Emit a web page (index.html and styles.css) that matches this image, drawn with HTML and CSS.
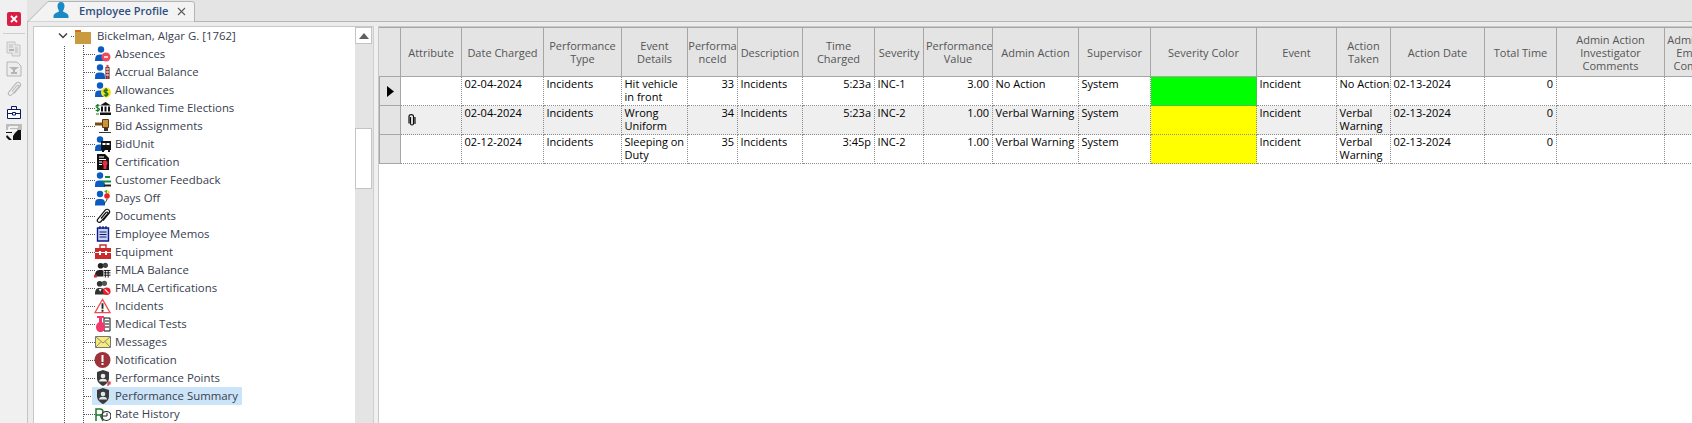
FILE: index.html
```html
<!DOCTYPE html>
<html lang="en">
<head>
<meta charset="utf-8">
<title>Employee Profile</title>
<link rel="stylesheet" href="styles.css">
</head>
<body>
<div class="app">
  <aside class="toolbar">
    <div class="close-btn"><svg width="14" height="14" viewBox="0 0 14 14"><rect width="14" height="14" rx="2" fill="#d81e45"/><path d="M4 4l6 6M10 4l-6 6" stroke="#fff" stroke-width="1.800"/></svg></div>
    <div class="tool-sep"></div>
    <svg class="tool" width="16" height="16" viewBox="0 0 16 16"><path d="M1 1h8v3h5v11H6v-3H1z" fill="#e6e6e6" stroke="#c4c4c4"/><path d="M3 4h4M3 6h4M9 7h3M9 9h3M9 11h3" stroke="#bdbdbd"/><path d="M3 9h5" stroke="#b5b5b5" stroke-width="2"/></svg>
    <svg class="tool" width="16" height="16" viewBox="0 0 16 16"><path d="M1 1h10l4 4v10H1z" fill="#ececec" stroke="#b5b5b5"/><path d="M3 6h10l-4 3v2h2v2H5v-2h2V9z" fill="#b4b4b4"/></svg>
    <svg class="tool" width="16" height="16" viewBox="0 0 16 16"><path d="M6 10.500L11 4.500c1.200-1.300 2.700.1 1.600 1.500L6 13.500c-2 2.300-5-.3-3-2.700L10 2.300c2.400-2.800 6.200.5 3.800 3.300L8 12.500" fill="none" stroke="#b8b8b8" stroke-width="1.100"/></svg>
    <svg class="tool tool-gap" width="16" height="16" viewBox="0 0 16 16"><path d="M1.500 5.500h13v9h-13z" fill="#fff" stroke="#0b1a66"/><path d="M5.500 5.500v-3h5v3M1.500 9.500h13" fill="none" stroke="#0b1a66"/><path d="M6.500 8.500h3v2.500h-3z" fill="#fff" stroke="#0b1a66"/></svg>
    <svg class="tool" width="16" height="16" viewBox="0 0 16 16"><rect width="16" height="6" fill="#bdbdbd"/><path d="M3 3h9M3 3v3h8" fill="none" stroke="#fff" stroke-width="1.500"/><path d="M9 9l3-3h3v10H7v-4z" fill="#111"/><path d="M0 8h6v1H0zM1 11l5 5H3l-3-3z" fill="#111"/></svg>
  </aside>
  <main class="workspace">
    <div class="tabstrip">
      <div class="tab">
        <svg class="tab-shape" width="168" height="22" viewBox="0 0 168 22"><path d="M0.500 22L21 1.500H165q2.500 0 2.500 2.500V22z" fill="#f3f3f3" stroke="#b4b4b4"/></svg>
        <svg class="tab-icon" width="16" height="16" viewBox="0 0 16 16"><path d="M8 0c2.500 0 3.500 2 3.500 4S10.500 8 10 9c0 1.500 5 1.500 5.500 5v2H.5v-2c.5-3.500 5.500-3.500 5.500-5-.5-1-1.500-3-1.500-5S5.500 0 8 0z" fill="#1b8ac4"/></svg>
        <span class="tab-title">Employee Profile</span>
        <svg class="tab-close" width="9" height="9" viewBox="0 0 9 9"><path d="M1 1l7 7M8 1L1 8" stroke="#5c5c5c" stroke-width="1.100"/></svg>
      </div>
    </div>
    <div class="panel">
      <section class="tree-pane">
        <div class="tree">
          <div class="tree-level">
            <div class="root-row">
              <svg class="chevron" width="10" height="6" viewBox="0 0 10 6"><path d="M1 .5l4 4 4-4" fill="none" stroke="#444" stroke-width="1.500"/></svg>
              <span class="root-dots"></span>
              <svg class="folder" width="16" height="15" viewBox="0 0 16 15"><path d="M0 1h6v2H0z" fill="#cf6f18"/><path d="M0 3h16v12H0z" fill="#c99a3f"/></svg>
              <span class="node-label">Bickelman, Algar G. [1762]</span>
            </div>
            <ul class="nodes">
              <li class="node"><span class="node-body"><svg class="ico" viewBox="0 0 16 16"><circle cx="6" cy="3.500" r="3.200" fill="#0a5cc4"/><path d="M0 15c0-6 2-6.500 6-6.500s6 .5 6 6.500z" fill="#0a5cc4"/><circle cx="11" cy="11" r="4.500" fill="#ef4a5a"/><path d="M9 11h4" stroke="#fff" stroke-width="1.500"/></svg><span class="node-label">Absences</span></span></li>
              <li class="node"><span class="node-body"><svg class="ico" viewBox="0 0 16 16"><circle cx="5" cy="3.500" r="3.200" fill="#0a5cc4"/><path d="M0 15c0-6 1-6.500 5-6.500s5 .5 5 6.500z" fill="#0a5cc4"/><path d="M10.500 3h4v12h-4z" fill="#222"/><path d="M11.500 1h2v14h-2z" fill="#e23b3b"/><path d="M11 5h3M11 8h3M11 11h3" stroke="#fff"/></svg><span class="node-label">Accrual Balance</span></span></li>
              <li class="node"><span class="node-body"><svg class="ico" viewBox="0 0 16 16"><circle cx="5" cy="3.500" r="3.200" fill="#0a5cc4"/><path d="M0 15c0-6 1-6.500 5-6.500s5 .5 5 6.500z" fill="#0a5cc4"/><circle cx="11" cy="10.500" r="5" fill="#f5e61a"/><path d="M13 8.500c-1-1-4-1-4 .7s4 1 4 2.800-3 1.600-4 .6M11 6v9" fill="none" stroke="#11632a" stroke-width="1.200"/></svg><span class="node-label">Allowances</span></span></li>
              <li class="node"><span class="node-body"><svg class="ico" viewBox="0 0 16 16"><path d="M4.500 5.500C3 4.500 1 5 1 6.500s3.500 1 3.500 2.800-2.800 1.600-3.900.6M2.800 4v8M1 14h3" fill="none" stroke="#0b7a22" stroke-width="1.100"/><path d="M10.500 2L16 5.500H5z" fill="#111"/><path d="M6 6.500h2v5H6zM9.500 6.500h2v5h-2zM13 6.500h2v5h-2zM5 12.500h11V15H5z" fill="#111"/></svg><span class="node-label">Banked Time Elections</span></span></li>
              <li class="node"><span class="node-body"><svg class="ico" viewBox="0 0 16 16"><path d="M7.500 1.500h6v8h-6z" fill="#c8953a" stroke="#5a3c10"/><path d="M0 4.500h7.500v3H0z" fill="#7a4a12"/><path d="M4 14h12v1H4zM9 10h4v3H9z" fill="#333"/></svg><span class="node-label">Bid Assignments</span></span></li>
              <li class="node"><span class="node-body"><svg class="ico" viewBox="0 0 16 16"><circle cx="5" cy="3.500" r="3.200" fill="#0a5cc4"/><path d="M0 15c0-6 1-6.500 5-6.500s5 .5 5 6.500z" fill="#0a5cc4"/><rect x="6" y="5" width="10" height="9" fill="#111"/><path d="M7.500 7h3v2h-3zM11.500 7h3v2h-3z" fill="#fff"/><path d="M7 15h2M13 15h2" stroke="#111" stroke-width="2"/></svg><span class="node-label">BidUnit</span></span></li>
              <li class="node"><span class="node-body"><svg class="ico" viewBox="0 0 16 16"><path d="M2 0h8l4 4v12H2z" fill="#111"/><path d="M4 2.500h5v1H4zM4 5h7v1H4z" fill="#fff"/><path d="M4 7.500h3v1H4zM4 10h3v1H4z" fill="#fff"/><circle cx="10" cy="9" r="2.500" fill="#ed2f3b"/><path d="M8.500 10.500h3V15h-3z" fill="#ed2f3b"/></svg><span class="node-label">Certification</span></span></li>
              <li class="node"><span class="node-body"><svg class="ico" viewBox="0 0 16 16"><circle cx="5" cy="3.500" r="3.200" fill="#0a5cc4"/><path d="M0 15c0-6 1-6.500 5-6.500s5 .5 5 6.500z" fill="#0a5cc4"/><path d="M10 4h5v2h-5zM7 8.500h9v2H7z" fill="#0e8c3a"/><path d="M9 12.500h7v2H9z" fill="#222"/></svg><span class="node-label">Customer Feedback</span></span></li>
              <li class="node"><span class="node-body"><svg class="ico" viewBox="0 0 16 16"><circle cx="5" cy="4" r="3.200" fill="#0a5cc4"/><path d="M0 15.500c0-6 1-6.500 5-6.500s5 .5 5 6.500z" fill="#0a5cc4"/><path d="M9 1l3-1v4z" fill="#2ab82a"/><path d="M12 0l3 2-2 3z" fill="#f5d51a"/><circle cx="12" cy="6" r="2.800" fill="#e8202a"/><path d="M12 9c0 2-2 3-3 5" fill="none" stroke="#222"/></svg><span class="node-label">Days Off</span></span></li>
              <li class="node"><span class="node-body"><svg class="ico" viewBox="0 0 16 16"><path d="M6 10.500L11 4.500c1.200-1.300 2.700.1 1.600 1.500L6 13.500c-2 2.300-5-.3-3-2.700L10 2.300c2.400-2.800 6.200.5 3.800 3.300L8 12.500" fill="none" stroke="#111" stroke-width="1.200"/></svg><span class="node-label">Documents</span></span></li>
              <li class="node"><span class="node-body"><svg class="ico" viewBox="0 0 16 16"><path d="M2.500 2h11v13h-11z" fill="#c9d2ee" stroke="#0a1a8c" stroke-width="1.400"/><path d="M5 0v3M8 0v3M11 0v3M4.500 6h7M4.500 8.500h7M4.500 11h7" stroke="#0a1a8c" stroke-width="1.200"/></svg><span class="node-label">Employee Memos</span></span></li>
              <li class="node"><span class="node-body"><svg class="ico" viewBox="0 0 16 16"><path d="M5 4V1h6v3" fill="none" stroke="#c92a2a" stroke-width="1.400"/><path d="M0 4h16v4H0zM0 9h16v6H0z" fill="#c92a2a"/><path d="M4 7h2v4H4zM10 7h2v4h-2z" fill="#fff"/></svg><span class="node-label">Equipment</span></span></li>
              <li class="node"><span class="node-body"><svg class="ico wide" viewBox="0 0 18 16"><circle cx="7" cy="3.500" r="3" fill="#222"/><circle cx="12" cy="3" r="2.800" fill="#444"/><path d="M1 15c0-6 2-7 6-7s4 1 5 2v5z" fill="#222"/><path d="M0 13h3v3H0z" fill="#d92c2c"/><path d="M10 8h8v8h-8z" fill="#fff"/><path d="M10.500 8.500h7M10.500 11h7M10.500 13.500h7M12 8v8M15 8v8" stroke="#111"/></svg><span class="node-label">FMLA Balance</span></span></li>
              <li class="node"><span class="node-body"><svg class="ico wide" viewBox="0 0 18 16"><circle cx="6" cy="3.500" r="3" fill="#333"/><circle cx="11" cy="3" r="2.800" fill="#555"/><path d="M1 15c0-6 2-7 5-7s5 1 6 2v5z" fill="#333"/><path d="M5 9l1.500 3L8 9z" fill="#fff"/><circle cx="13.500" cy="11.500" r="4" fill="#ed1c24"/><path d="M11.500 9.500l4 4" stroke="#fff" stroke-width="1.200"/></svg><span class="node-label">FMLA Certifications</span></span></li>
              <li class="node"><span class="node-body"><svg class="ico wide" viewBox="0 0 18 16"><path d="M9 1L17 15H1z" fill="#fff" stroke="#f04a4a" stroke-width="1.300"/><path d="M8 5h2v6H8zM8 12h2v2H8z" fill="#222"/></svg><span class="node-label">Incidents</span></span></li>
              <li class="node"><span class="node-body"><svg class="ico" viewBox="0 0 16 16"><path d="M9 2h6v13H9z" fill="#fff" stroke="#111"/><path d="M10 5h4M10 8h4M10 11h4" stroke="#111"/><path d="M2 0h7v2H7v4c2 1 3 3 3 5 0 3-2 5-4.500 5S1 14 1 11c0-2 1-4 3-5V2H2z" fill="#f03a6e"/></svg><span class="node-label">Medical Tests</span></span></li>
              <li class="node"><span class="node-body"><svg class="ico" viewBox="0 0 16 16"><path d="M.500 2.500h15v11H.5z" fill="#f7ec7a" stroke="#777"/><path d="M1 3l7 6 7-6M1 13l5-5.500M15 13l-5-5.500" fill="none" stroke="#888"/></svg><span class="node-label">Messages</span></span></li>
              <li class="node"><span class="node-body"><svg class="ico wide" viewBox="0 0 16 16"><circle cx="8" cy="8" r="8" fill="#9c3338"/><path d="M7 3h2v7H7zM7 11h2v2H7z" fill="#fff"/></svg><span class="node-label">Notification</span></span></li>
              <li class="node"><span class="node-body"><svg class="ico" viewBox="0 0 16 16"><path d="M8 0l6 2v6c0 4-3 6.500-6 8-3-1.500-6-4-6-8V2z" fill="#3a3a3a"/><circle cx="8" cy="6" r="2.300" fill="#eee"/><path d="M4 11.500c0-2 2-2.700 4-2.700s4 .7 4 2.700z" fill="#eee"/><path d="M12 12h4v4h-4z" fill="#fff"/><path d="M13 16v-4h2v2h-2" fill="none" stroke="#d01818" stroke-width="1.100"/></svg><span class="node-label">Performance Points</span></span></li>
              <li class="node is-selected"><span class="node-body"><svg class="ico" viewBox="0 0 16 16"><path d="M8 0l6 2v6c0 4-3 6.500-6 8-3-1.500-6-4-6-8V2z" fill="#3a3a3a"/><circle cx="8" cy="6" r="2.300" fill="#dfe6ee"/><path d="M4 11.500c0-2 2-2.700 4-2.700s4 .7 4 2.700z" fill="#dfe6ee"/></svg><span class="node-label">Performance Summary</span></span></li>
              <li class="node"><span class="node-body"><svg class="ico" viewBox="0 0 16 16"><path d="M1 15V3h4a3 3 0 0 1 0 6H1M5 9l3 6" fill="none" stroke="#1a7a2a" stroke-width="1.500"/><circle cx="11.500" cy="10" r="4.500" fill="#fff" stroke="#222" stroke-width="1.200"/><path d="M7 10h5V7" fill="none" stroke="#222"/></svg><span class="node-label">Rate History</span></span></li>
            </ul>
          </div>
        </div>
        <div class="vscroll">
          <div class="sc-btn"><svg width="10" height="6" viewBox="0 0 10 6"><path d="M5 0l5 6H0z" fill="#606060"/></svg></div>
          <div class="sc-track-top"></div>
          <div class="sc-thumb"></div>
        </div>
      </section>
      <div class="splitter"></div>
      <section class="grid-pane">
        <table class="grid">
          <colgroup>
            <col class="c22"><col class="c61"><col class="c82"><col class="c78"><col class="c66"><col class="c50"><col class="c65"><col class="c72"><col class="c49"><col class="c69"><col class="c86"><col class="c72"><col class="c106"><col class="c80"><col class="c54"><col class="c94"><col class="c72"><col class="c108"><col class="c74">
          </colgroup>
          <thead>
            <tr>
              <th></th><th>Attribute</th><th>Date Charged</th><th>Performance Type</th><th>Event Details</th><th class="tight">Performa nceId</th><th>Description</th><th>Time Charged</th><th>Severity</th><th>Performance Value</th><th>Admin Action</th><th>Supervisor</th><th>Severity Color</th><th>Event</th><th>Action Taken</th><th>Action Date</th><th>Total Time</th><th>Admin Action Investigator Comments</th><th>Admin Action Employee Comments</th>
            </tr>
          </thead>
          <tbody>
            <tr>
              <td class="rh"><svg width="7" height="11" viewBox="0 0 7 11"><path d="M0 0l7 5.500L0 11z" fill="#000"/></svg></td><td></td><td>02-04-2024</td><td>Incidents</td><td>Hit vehicle in front</td><td class="num">33</td><td>Incidents</td><td class="num">5:23a</td><td>INC-1</td><td class="num">3.00</td><td>No Action</td><td>System</td><td class="sev-green"></td><td>Incident</td><td>No Action</td><td>02-13-2024</td><td class="num">0</td><td></td><td></td>
            </tr>
            <tr class="alt">
              <td class="rh"></td><td><svg class="clip" width="8" height="12" viewBox="0 0 8 12"><path d="M2.500 3v6.500c0 2 3 2 3 0V2.500C5.500 0 1 0 1 2.500v7M7 3v7" fill="none" stroke="#111" stroke-width="1.200"/></svg></td><td>02-04-2024</td><td>Incidents</td><td>Wrong Uniform</td><td class="num">34</td><td>Incidents</td><td class="num">5:23a</td><td>INC-2</td><td class="num">1.00</td><td>Verbal Warning</td><td>System</td><td class="sev-yellow"></td><td>Incident</td><td>Verbal Warning</td><td>02-13-2024</td><td class="num">0</td><td></td><td></td>
            </tr>
            <tr>
              <td class="rh"></td><td></td><td>02-12-2024</td><td>Incidents</td><td>Sleeping on Duty</td><td class="num">35</td><td>Incidents</td><td class="num">3:45p</td><td>INC-2</td><td class="num">1.00</td><td>Verbal Warning</td><td>System</td><td class="sev-yellow"></td><td>Incident</td><td>Verbal Warning</td><td>02-13-2024</td><td class="num">0</td><td></td><td></td>
            </tr>
          </tbody>
        </table>
      </section>
    </div>
  </main>
</div>
</body>
</html>
```
FILE: styles.css
```css
* { box-sizing: border-box; }
html, body { margin: 0; height: 100%; }
body {
  background: #f0f0f0;
  font-family: "Open Sans", "Noto Sans", sans-serif;
  font-size: 11px;
  overflow: hidden;
}
ul { list-style: none; margin: 0; padding: 0; }
svg { display: block; flex: none; }

.app { display: flex; width: 1692px; height: 423px; overflow: hidden; }

.toolbar {
  width: 27px;
  flex: none;
  display: flex;
  flex-direction: column;
  align-items: center;
  padding-top: 12px;
  background: #f0f0f0;
}
.close-btn { height: 21px; }
.tool-sep { width: 22px; height: 1px; background: #cfcfcf; margin-bottom: 7px; }
.tool { margin-bottom: 4px; }
.tool-gap { margin-top: 3px; }

.workspace { flex: 1; min-width: 0; display: flex; flex-direction: column; background: #e4e4e4; }
.tabstrip { height: 21px; flex: none; background: #e4e4e4; }
.tab {
  position: relative;
  width: 168px;
  height: 22px;
  display: flex;
  align-items: center;
  padding-left: 26px;
  z-index: 1;
}
.tab-shape { position: absolute; left: 0; top: 0; }
.tab-icon { position: relative; top: -1px; }
.tab-title {
  position: relative;
  top: -1px;
  margin-left: 10px;
  font-size: 11px;
  font-weight: 600;
  color: #2e4f7f;
  white-space: nowrap;
}
.tab-close { position: relative; margin-left: 9px; }

.panel {
  flex: 1;
  min-height: 0;
  display: flex;
  background: #ececec;
  border-top: 1px solid #b4b4b4;
  border-left: 1px solid #c4c4c4;
  padding-top: 4px;
  padding-left: 5px;
}

.tree-pane {
  width: 340px;
  flex: none;
  display: flex;
  border-left: 1px solid #c8c8c8;
  border-top: 1px solid #c8c8c8;
  background: #fff;
}
.tree {
  flex: 1;
  min-width: 0;
  overflow: hidden;
  padding-left: 30px;
  background: #fff;
  color: #38404f;
  font-size: 11.4px;
}
.tree-level { border-left: 1px dotted #555; }
.root-row { height: 18px; display: flex; align-items: center; background: #fff; margin-left: -7px; }
.root-dots { width: 3px; margin-left: 3px; margin-right: 1px; border-top: 1px dotted #555; }
.root-row .node-label { margin-left: 6px; }
.node-label { white-space: nowrap; line-height: 18px; }
.nodes { margin-left: 18px; border-left: 1px dotted #555; }
.node {
  position: relative;
  height: 18px;
  display: flex;
  align-items: center;
}
.node::before {
  content: "";
  position: absolute;
  left: 0;
  top: 9px;
  width: 11px;
  border-top: 1px dotted #555;
}
.node-body {
  position: relative;
  display: flex;
  align-items: center;
  gap: 4px;
  height: 18px;
  margin-left: 8px;
  padding: 0 4px 0 3px;
}
.ico { width: 16px; height: 16px; }
.ico.wide { width: 17px; margin-left: -1px; }
.is-selected .node-body { background: #cce4f7; }

.vscroll { width: 18px; flex: none; background: #e4e4e4; display: flex; flex-direction: column; }
.sc-btn { height: 17px; margin-right: 1px; background: #fff; border: 1px solid #c4c4c4; display: flex; align-items: center; justify-content: center; }
.sc-track-top { height: 84px; }
.sc-thumb { height: 61px; margin-right: 1px; background: #fff; border: 1px solid #c4c4c4; }

.splitter { width: 5px; flex: none; background: #f0f0f0; border-left: 1px solid #cfcfcf; }

.grid-pane { flex: 1; min-width: 0; overflow: hidden; background: #fff; border-left: 1px solid #c8c8c8; border-top: 1px solid #c8c8c8; }
.grid { border-collapse: separate; border-spacing: 0; table-layout: fixed; width: 1360px; color: #000; font-size: 11px; line-height: 13px; }
.c22 { width: 22px; } .c49 { width: 49px; } .c50 { width: 50px; } .c54 { width: 54px; }
.c61 { width: 61px; } .c65 { width: 65px; } .c66 { width: 66px; }
.c69 { width: 69px; } .c72 { width: 72px; } .c74 { width: 74px; } .c78 { width: 78px; } .c80 { width: 80px; }
.c82 { width: 82px; } .c86 { width: 86px; } .c94 { width: 94px; } .c106 { width: 106px; } .c108 { width: 108px; }

.grid th {
  height: 50px;
  padding: 0 2px;
  font-weight: 400;
  text-align: center;
  color: #555;
  background: #e4e4e4;
  border-top: 1px solid #a6a6a6;
  border-right: 1px solid #a6a6a6;
  border-bottom: 1px solid #a6a6a6;
  overflow: hidden;
}
.grid th.tight { padding: 0; word-break: break-all; }
.grid td {
  height: 29px;
  padding: 0 0 0 2.5px;
  vertical-align: top;
  border-right: 1px dotted #8c8c8c;
  border-bottom: 1px dotted #8c8c8c;
  overflow: hidden;
}
.grid td.rh {
  background: #e4e4e4;
  border-left: 1px solid #a6a6a6;
  border-right: 1px solid #a6a6a6;
  border-bottom: 1px solid #a6a6a6;
  vertical-align: middle;
  padding: 0 0 0 7px;
}
.grid .alt td:not(.rh):not(.sev-yellow) { background: #efefef; }
.grid td.num { text-align: right; padding-right: 3px; }
.grid td.sev-green { background: #00ff00; }
.grid td.sev-yellow { background: #ffff00; }
.clip { margin: 8px 0 0 4px; }
```
